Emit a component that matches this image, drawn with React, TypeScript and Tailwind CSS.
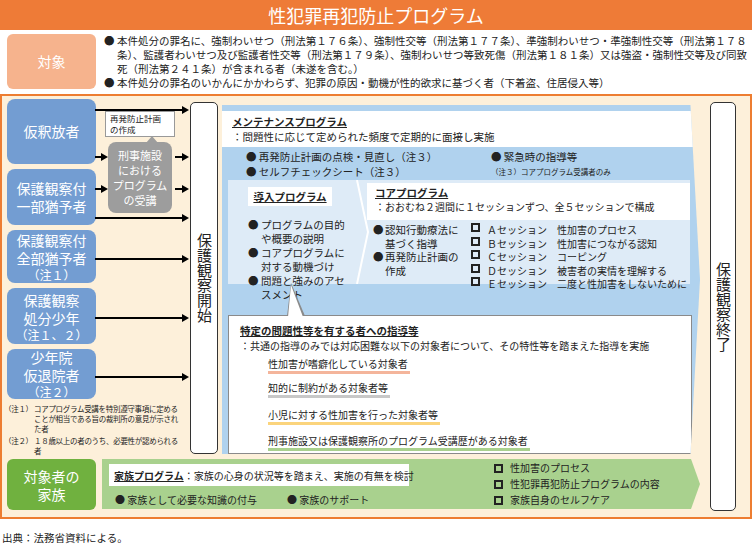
const font = { fontFamily: '"Noto Sans CJK JP", "Noto Sans", sans-serif' };

const Arrow = ({ top, left, width }: { top: number; left: number; width: number }) => (
  <div className="absolute h-[1.5px] bg-black" style={{ top, left, width }}>
    <div className="absolute right-[-2px] top-[-3.5px] w-0 h-0 border-y-[4px] border-y-transparent border-l-[7px] border-l-black" />
  </div>
);

const Sq = () => <span className="inline-block w-[9px] h-[9px] border-2 border-[#222] mr-[7px] align-[-1px]" />;

const LeftBox = ({ h, lines, note }: { h: number; lines: string[]; note?: string }) => (
  <div className="rounded-[8px] bg-[#739dd2] text-white flex flex-col items-center justify-center text-[14px] leading-[18px]" style={{ height: h }}>
    {lines.map((l) => (
      <div key={l}>{l}</div>
    ))}
    {note && <div className="text-[12px] leading-[15px]">{note}</div>}
  </div>
);

export default function App() {
  return (
    <div className="w-[752px] h-[547px] bg-white text-[#222] relative overflow-hidden" style={font}>
      <div className="h-[30px] bg-[#ee7b37] text-white text-[18px] flex items-center justify-center">性犯罪再犯防止プログラム</div>

      <div className="flex h-[63px] pt-[4px]">
        <div className="ml-[7px] w-[89px] h-[55px] rounded-[6px] bg-[#f6b38d] text-white text-[14px] flex items-center justify-center">対象</div>
        <div className="ml-[8px] text-[10.5px] leading-[14px] w-[645px]">
          <div className="flex"><span className="w-[13px] shrink-0">●</span><span className="flex-1">本件処分の罪名に、強制わいせつ（刑法第１７６条）、強制性交等（刑法第１７７条）、準強制わいせつ・準強制性交等（刑法第１７８条）、監護者わいせつ及び監護者性交等（刑法第１７９条）、強制わいせつ等致死傷（刑法第１８１条）又は強盗・強制性交等及び同致死（刑法第２４１条）が含まれる者（未遂を含む。）</span></div>
          <div className="flex"><span className="w-[13px] shrink-0">●</span><span className="flex-1">本件処分の罪名のいかんにかかわらず、犯罪の原因・動機が性的欲求に基づく者（下着盗、住居侵入等）</span></div>
        </div>
      </div>

      <div className="relative mt-[1px] border-2 border-[#ed7d31] bg-[#fdf0da] h-[425px] flex">
        <div className="w-[706px] flex flex-col">
          <div className="h-[360px] flex">
            <div className="ml-[5px] w-[89px] pt-[3px] flex flex-col gap-[5px]">
              <LeftBox h={65} lines={["仮釈放者"]} />
              <LeftBox h={57} lines={["保護観察付", "一部猶予者"]} />
              <LeftBox h={53} lines={["保護観察付", "全部猶予者"]} note="（注１）" />
              <LeftBox h={56} lines={["保護観察", "処分少年"]} note="（注１、２）" />
              <LeftBox h={50} lines={["少年院", "仮退院者"]} note="（注２）" />
              <div className="text-[7.5px] leading-[10px] -ml-[3px] w-[180px] relative z-10 tracking-[-0.3px]">
                <div className="flex"><span className="w-[30px] shrink-0">（注１）</span><span>コアプログラム受講を特別遵守事項に定めることが相当である旨の裁判所の意見が示された者</span></div>
                <div className="flex mt-[2px]"><span className="w-[30px] shrink-0">（注２）</span><span>１８歳以上の者のうち、必要性が認められる者</span></div>
              </div>
            </div>
            <div className="w-[94px]" />
            <div className="w-[28px] mt-[6px] h-[352px] bg-white border-[1.5px] border-[#333] rounded-[5px] flex items-center justify-center">
              <span className="text-[15px] leading-[18px] [writing-mode:vertical-rl]">保護観察開始</span>
            </div>
            <div className="ml-[4px] w-[478px] mt-[9px] h-[349px] bg-[#b0d2ee] relative [clip-path:polygon(0_0,98%_0,100%_50%,98%_100%,0_100%)]">
              <div className="mt-[6px] w-[473px] h-[36px] bg-white px-[10px] pt-[3px] text-[10.5px] leading-[15px]">
                <div className="font-bold underline">メンテナンスプログラム</div>
                <div>：問題性に応じて定められた頻度で定期的に面接し実施</div>
              </div>
              <div className="h-[33px] text-[10.5px] leading-[15px] pt-[2px] flex">
                <div className="ml-[24px] w-[245px]">
                  <div>●&nbsp;再発防止計画の点検・見直し（注３）</div>
                  <div>●&nbsp;セルフチェックシート（注３）</div>
                </div>
                <div>
                  <div>●&nbsp;緊急時の指導等</div>
                  <div className="text-[7.5px] leading-[14px] pt-[1px]">（注３）コアプログラム受講者のみ</div>
                </div>
              </div>
              <div className="ml-[6px] w-[462px] h-[104px] bg-[#deebf7] relative flex text-[10.5px] leading-[14px]">
                <svg className="absolute left-[126px] top-0" width="16" height="104"><polyline points="3,0 14,52 3,104" fill="none" stroke="#fff" strokeWidth="2" /></svg>
                <div className="w-[137px] pl-[20px] pt-[7px]">
                  <div className="bg-white w-[84px] h-[19px] font-bold underline flex items-center justify-center">導入プログラム</div>
                  <div className="mt-[12px] pr-[10px]">
                    <div className="flex"><span className="w-[13px] shrink-0">●</span><span>プログラムの目的や概要の説明</span></div>
                    <div className="flex"><span className="w-[13px] shrink-0">●</span><span>コアプログラムに対する動機づけ</span></div>
                    <div className="flex"><span className="w-[13px] shrink-0">●</span><span>問題と強みのアセスメント</span></div>
                  </div>
                </div>
                <div className="flex-1 pt-[3px]">
                  <div className="bg-white h-[37px] ml-[2px] pl-[8px] pt-[3px] whitespace-nowrap">
                    <div className="font-bold underline">コアプログラム</div>
                    <div className="text-[10px]">：おおむね２週間に１セッションずつ、全５セッションで構成</div>
                  </div>
                  <div className="flex pt-[3px] leading-[13.5px]">
                    <div className="w-[106px] pl-[8px] pr-[4px]">
                      <div className="flex"><span className="w-[12px] shrink-0">●</span><span>認知行動療法に基づく指導</span></div>
                      <div className="flex"><span className="w-[12px] shrink-0">●</span><span>再発防止計画の作成</span></div>
                    </div>
                    <div className="text-[10px] whitespace-nowrap">
                      {[["Ａセッション", "性加害のプロセス"], ["Ｂセッション", "性加害につながる認知"], ["Ｃセッション", "コーピング"], ["Ｄセッション", "被害者の実情を理解する"], ["Ｅセッション", "二度と性加害をしないために"]].map(([a, b]) => (
                        <div key={a} className="flex"><Sq /><span className="w-[70px]">{a}</span><span>{b}</span></div>
                      ))}
                    </div>
                  </div>
                </div>
              </div>
              <div className="mt-[31px] ml-[6px] w-[464px] h-[139px] bg-white border border-[#8a8a8a] relative px-[11px] pt-[7px] text-[10.5px] leading-[15px]">
                <div className="absolute left-[58px] top-[-33px] w-0 h-0 border-l-[4px] border-l-transparent border-r-[14px] border-r-transparent border-b-[33px] border-b-[#8a8a8a]" />
                <div className="absolute left-[59px] top-[-31px] w-0 h-0 border-l-[3px] border-l-transparent border-r-[12px] border-r-transparent border-b-[32px] border-b-white" />
                <div className="font-bold underline">特定の問題性等を有する者への指導等</div>
                <div className="text-[10px] whitespace-nowrap">：共通の指導のみでは対応困難な以下の対象者について、その特性等を踏まえた指導を実施</div>
                <div className="pl-[28px] text-[10px] flex flex-col items-start">
                  <div className="mt-[3px] border-b-[3px] border-[#f4b59b] pr-[2px]">性加害が嗜癖化している対象者</div>
                  <div className="mt-[6px] border-b-[3px] border-[#c8c8c8] pr-[2px]">知的に制約がある対象者等</div>
                  <div className="mt-[9px] border-b-[3px] border-[#fbd47c] pr-[2px]">小児に対する性加害を行った対象者等</div>
                  <div className="mt-[8px] border-b-[3px] border-[#a9d18e] pr-[2px]">刑事施設又は保護観察所のプログラム受講歴がある対象者</div>
                </div>
              </div>
            </div>
          </div>
          <div className="h-[55px] flex pt-[3px]">
            <div className="ml-[5px] w-[89px] h-[51px] rounded-[6px] bg-[#70b13f] text-white text-[14px] leading-[18px] flex flex-col items-center justify-center">
              <div>対象者の</div><div>家族</div>
            </div>
            <div className="ml-[6px] w-[598px] h-[50px] bg-[#a9d18e] [clip-path:polygon(0_0,98.5%_0,100%_50%,98.5%_100%,0_100%)] flex text-[10px] leading-[15px]">
              <div className="pl-[7px] pt-[5px] w-[392px]">
                <div className="bg-white w-[300px] h-[22px] pl-[5px] flex items-center whitespace-nowrap"><span className="font-bold underline">家族プログラム</span>：家族の心身の状況等を踏まえ、実施の有無を検討</div>
                <div className="flex mt-[6px] pl-[6px]"><span className="w-[172px]">●&nbsp;家族として必要な知識の付与</span><span>●&nbsp;家族のサポート</span></div>
              </div>
              <div className="pt-[1px] leading-[16px]">
                <div><Sq />性加害のプロセス</div>
                <div><Sq />性犯罪再犯防止プログラムの内容</div>
                <div><Sq />家族自身のセルフケア</div>
              </div>
            </div>
          </div>
        </div>
        <div className="ml-[2px] mt-[6px] w-[26px] h-[409px] bg-white border-[1.5px] border-[#333] rounded-[5px] flex items-center justify-center">
          <span className="text-[15px] leading-[18px] [writing-mode:vertical-rl]">保護観察終了</span>
        </div>

        <Arrow top={13} left={93} width={92} />
        <Arrow top={60} left={93} width={11} />
        <Arrow top={60} left={173} width={12} />
        <Arrow top={92} left={93} width={11} />
        <Arrow top={92} left={173} width={12} />
        <Arrow top={121} left={93} width={92} />
        <Arrow top={162} left={93} width={92} />
        <Arrow top={221} left={93} width={92} />
        <Arrow top={280} left={93} width={92} />

        <div className="absolute left-[103px] top-[15px] w-[70px] h-[26px] bg-white border border-[#999] text-[8.5px] leading-[11px] pl-[4px] pt-[1px]">再発防止計画<br />の作成</div>
        <div className="absolute left-[106px] top-[46px] w-[64px] h-[71px] bg-[#9d9d9d] rounded-[8px] text-white text-[11px] leading-[15px] flex flex-col items-center justify-center">
          <div className="absolute left-[38px] top-[-6px] w-0 h-0 border-l-[6px] border-l-transparent border-r-[6px] border-r-transparent border-b-[7px] border-b-[#9d9d9d]" />
          <div>刑事施設</div><div>における</div><div>プログラム</div><div>の受講</div>
        </div>
      </div>

      <div className="mt-[11px] ml-[2px] text-[10.5px]">出典：法務省資料による。</div>
    </div>
  );
}
